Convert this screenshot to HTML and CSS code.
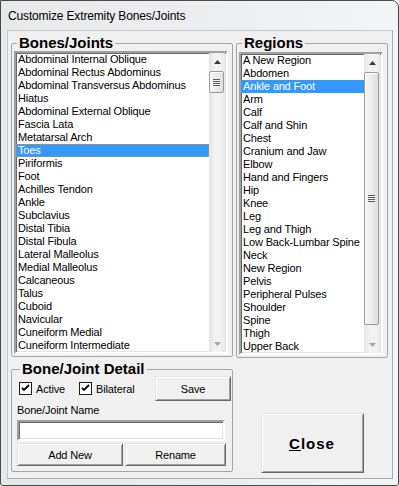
FILE: index.html
```html
<!DOCTYPE html>
<html lang="en">
<head>
    <meta charset="UTF-8">
    <title>Customize Extremity Bones/Joints</title>
    <link rel="stylesheet" href="styles.css">
</head>
<body>
    <div class="window">
        <div class="titlebar"><span class="title">Customize Extremity Bones/Joints</span></div>

        <div class="client">
            <div class="lists">
                <!-- Bones / joints list -->
                <fieldset class="group bones">
                    <legend>Bones/Joints</legend>
                    <div class="listbox">
                        <ul class="items">
                            <li>Abdominal Internal Oblique</li>
                            <li>Abdominal Rectus Abdominus</li>
                            <li>Abdominal Transversus Abdominus</li>
                            <li>Hiatus</li>
                            <li>Abdominal External Oblique</li>
                            <li>Fascia Lata</li>
                            <li>Metatarsal Arch</li>
                            <li class="selected focused">Toes</li>
                            <li>Piriformis</li>
                            <li>Foot</li>
                            <li>Achilles Tendon</li>
                            <li>Ankle</li>
                            <li>Subclavius</li>
                            <li>Distal Tibia</li>
                            <li>Distal Fibula</li>
                            <li>Lateral Malleolus</li>
                            <li>Medial Malleolus</li>
                            <li>Calcaneous</li>
                            <li>Talus</li>
                            <li>Cuboid</li>
                            <li>Navicular</li>
                            <li>Cuneiform Medial</li>
                            <li>Cuneiform Intermediate</li>
                        </ul>
                        <div class="vscroll">
                            <div class="arrow up"><svg width="7" height="4" viewBox="0 0 7 4"><polygon points="0,4 3.5,0 7,4"/></svg></div>
                            <div class="track"><div class="thumb" style="height: 22px"><span class="grip"></span></div></div>
                            <div class="arrow down"><svg width="7" height="4" viewBox="0 0 7 4"><polygon points="0,0 7,0 3.5,4"/></svg></div>
                        </div>
                    </div>
                </fieldset>

                <!-- Regions list -->
                <fieldset class="group regions">
                    <legend>Regions</legend>
                    <div class="listbox">
                        <ul class="items">
                            <li>A New Region</li>
                            <li>Abdomen</li>
                            <li class="selected">Ankle and Foot</li>
                            <li>Arm</li>
                            <li>Calf</li>
                            <li>Calf and Shin</li>
                            <li>Chest</li>
                            <li>Cranium and Jaw</li>
                            <li>Elbow</li>
                            <li>Hand and Fingers</li>
                            <li>Hip</li>
                            <li>Knee</li>
                            <li>Leg</li>
                            <li>Leg and Thigh</li>
                            <li>Low Back-Lumbar Spine</li>
                            <li>Neck</li>
                            <li>New Region</li>
                            <li>Pelvis</li>
                            <li>Peripheral Pulses</li>
                            <li>Shoulder</li>
                            <li>Spine</li>
                            <li>Thigh</li>
                            <li>Upper Back</li>
                        </ul>
                        <div class="vscroll">
                            <div class="arrow up"><svg width="7" height="4" viewBox="0 0 7 4"><polygon points="0,4 3.5,0 7,4"/></svg></div>
                            <div class="track"><div class="thumb" style="height: 253px"><span class="grip"></span></div></div>
                            <div class="arrow down"><svg width="7" height="4" viewBox="0 0 7 4"><polygon points="0,0 7,0 3.5,4"/></svg></div>
                        </div>
                    </div>
                </fieldset>
            </div>

            <div class="bottom">
                <fieldset class="group detail">
                    <legend>Bone/Joint Detail</legend>
                    <div class="detail-row">
                        <label class="check first">
                            <span class="box"><svg width="11" height="11" viewBox="0 0 11 11"><path d="M2 5 L4 7 L9 2"/></svg></span>Active
                        </label>
                        <label class="check">
                            <span class="box"><svg width="11" height="11" viewBox="0 0 11 11"><path d="M2 5 L4 7 L9 2"/></svg></span>Bilateral
                        </label>
                        <button class="btn save">Save</button>
                    </div>
                    <div class="field-label">Bone/Joint Name</div>
                    <input class="textbox" type="text">
                    <div class="btn-row">
                        <button class="btn add">Add New</button>
                        <button class="btn rename">Rename</button>
                    </div>
                </fieldset>

                <div class="close-cell">
                    <button class="btn close"><u>C</u>lose</button>
                </div>
            </div>
        </div>
    </div>
</body>
</html>
```

FILE: styles.css
```css
* {
    box-sizing: border-box;
}

body {
    margin: 0;
    background: #ffffff;
    font-family: "Liberation Sans", Arial, sans-serif;
    font-size: 11px;
    letter-spacing: -0.15px;
    color: #000;
}

/* Window frame */
.window {
    width: 399px;
    height: 486px;
    border: 1px solid #4a4a4a;
    border-radius: 0 7px 3px 3px;
    background: linear-gradient(to right, #e7e9eb, #eceef0 55%, #f4f5f6);
    padding: 0 5px 6px 6px;
    display: flex;
    flex-direction: column;
    overflow: hidden;
}

.titlebar {
    height: 29px;
    display: flex;
    align-items: center;
    padding-left: 1px;
}

.title {
    font-size: 12px;
    color: #000;
}

.client {
    flex: 1;
    background: #f0f0f0;
    border: 1px solid;
    border-color: #c4c8cc #a9adb1 #a9adb1 #c4c8cc;
    padding: 5px 4px 0 3px;
}

.lists,
.bottom {
    display: grid;
    grid-template-columns: 222px 152px;
    column-gap: 3px;
    align-items: start;
}

.bottom {
    margin-top: 4px;
    align-items: stretch;
}

/* Group boxes */
.group {
    margin: 0;
    border: 1px solid #a5a5a5;
    border-radius: 2px;
    min-width: 0;
}

.group legend {
    font-size: 15px;
    font-weight: bold;
    line-height: 14px;
    letter-spacing: 0;
    padding: 0 2px;
    margin-left: 3px;
}

.bones {
    padding: 1px 4px 2px 2px;
}

.regions {
    padding: 2px 4px 2px 2px;
}

/* List boxes */
.listbox {
    display: flex;
    background: #fff;
    border: 2px solid;
    border-color: #a0a0a0 #ffffff #ffffff #a0a0a0;
    box-shadow: inset 1px 1px #696969, inset -1px -1px #e3e3e3;
    padding: 0 1px 0 0;
}

.items {
    list-style: none;
    margin: 0;
    padding: 0;
    flex: 1;
    min-width: 0;
}

.items li {
    height: 13px;
    line-height: 13px;
    padding-left: 2px;
    white-space: nowrap;
    overflow: hidden;
}

.items li.selected {
    background: #3399ff;
    color: #fff;
}

.items li.focused {
    outline: 1px dotted #e8862b;
    outline-offset: -1px;
}

/* Scroll bar */
.vscroll {
    width: 16px;
    display: flex;
    flex-direction: column;
    background: linear-gradient(to right, #e4e4e4, #f2f2f2 35%, #f2f2f2 70%, #e9e9e9);
}

.arrow {
    height: 17px;
    display: flex;
    align-items: center;
    justify-content: center;
}

.arrow.up svg {
    fill: #3c3c3c;
}

.arrow.down svg {
    fill: #a4a4a4;
}

.track {
    flex: 1;
    padding-top: 1px;
}

.thumb {
    margin: 0 1px 0 0;
    border: 1px solid #9a9a9a;
    border-radius: 2px;
    background: linear-gradient(to right, #f6f6f6, #ececec 50%, #dedede);
    box-shadow: inset 1px 1px #fff;
    display: flex;
    align-items: center;
    justify-content: center;
}

.grip {
    width: 7px;
    height: 7px;
    background: repeating-linear-gradient(to bottom, #5a5a5a 0 1px, #f2f2f2 1px 2px);
}

/* Detail group */
.detail {
    padding: 0 1px 5px 5px;
}

.detail-row {
    display: flex;
    align-items: center;
    height: 25px;
}

.check {
    display: flex;
    align-items: center;
    gap: 4px;
    margin-left: 14px;
}

.check.first {
    margin-left: 2px;
}

.box {
    width: 13px;
    height: 13px;
    background: #fff;
    border: 1px solid #1e1e1e;
    display: flex;
    align-items: center;
    justify-content: center;
}

.box path {
    fill: none;
    stroke: #000;
    stroke-width: 1.8;
}

.field-label {
    margin-top: 3px;
    line-height: 12px;
    height: 12px;
}

.textbox {
    display: block;
    margin-top: 4px;
    width: 208px;
    height: 21px;
    background: #fff;
    border: 2px solid;
    border-color: #a0a0a0 #ffffff #ffffff #a0a0a0;
    box-shadow: inset 1px 1px #696969, inset -1px -1px #e3e3e3;
    padding: 0 2px;
    outline: none;
}

.btn-row {
    display: flex;
    gap: 2px;
    margin-top: 2px;
}

/* Buttons */
.btn {
    font-family: "Liberation Sans", Arial, sans-serif;
    font-size: 11px;
    letter-spacing: -0.15px;
    color: #000;
    background: #f0f0f0;
    border: 1px solid;
    border-color: #e3e3e3 #696969 #696969 #e3e3e3;
    box-shadow: inset 1px 1px #ffffff, inset -1px -1px #a0a0a0;
    padding: 0;
    margin: 0;
}

.save {
    margin-left: auto;
    width: 76px;
    height: 25px;
}

.add {
    width: 106px;
    height: 23px;
}

.rename {
    width: 101px;
    height: 23px;
}

.close-cell {
    display: flex;
    align-items: flex-end;
    justify-content: center;
}

.close {
    width: 103px;
    height: 60px;
    font-size: 15px;
    font-weight: bold;
    letter-spacing: 1px;
    margin-bottom: -1px;
}
```
